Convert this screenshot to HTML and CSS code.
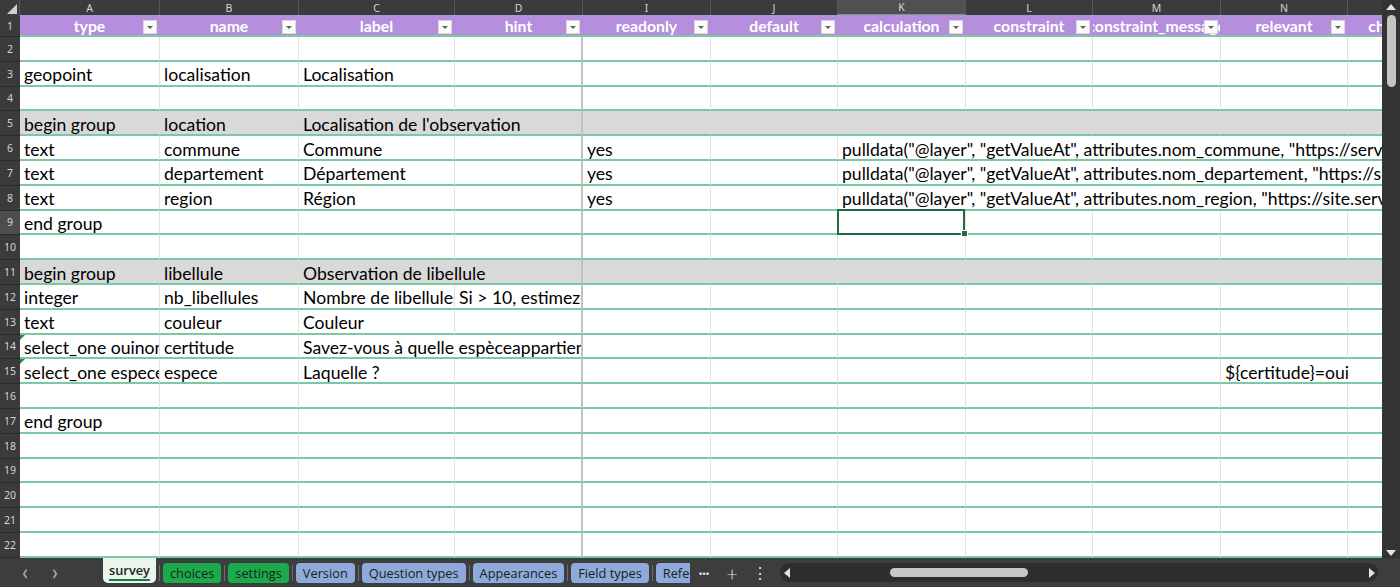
FILE: index.html
```html
<!DOCTYPE html>
<html lang="fr">

<head>
    <meta charset="UTF-8">
    <meta name="viewport" content="width=device-width, initial-scale=1.0">
    <title>survey - formulaire libellules</title>
    <link rel="stylesheet" href="styles.css">
</head>

<body>
    <div class="app">
        <div class="main">
            <div class="sheet">
                <!-- column letters -->
                <div class="row colhead">
                    <div class="corner"></div>
                    <div class="ch">A</div><div class="ch">B</div><div class="ch">C</div><div class="ch fz">D</div>
                    <div class="ch">I</div><div class="ch">J</div><div class="ch on">K</div><div class="ch">L</div>
                    <div class="ch">M</div><div class="ch">N</div><div class="ch">O</div>
                </div>

                <!-- table header -->
                <div class="row hdr">
                    <div class="rh">1</div>
                    <div class="c"><span>type</span><i class="fb"></i></div>
                    <div class="c"><span>name</span><i class="fb"></i></div>
                    <div class="c"><span>label</span><i class="fb"></i></div>
                    <div class="c"><span>hint</span><i class="fb"></i></div>
                    <div class="c"><span>readonly</span><i class="fb"></i></div>
                    <div class="c"><span>default</span><i class="fb"></i></div>
                    <div class="c"><span>calculation</span><i class="fb"></i></div>
                    <div class="c"><span>constraint</span><i class="fb"></i></div>
                    <div class="c"><span>constraint_message</span><i class="fb"></i></div>
                    <div class="c"><span>relevant</span><i class="fb"></i></div>
                    <div class="c"><span>choice_filter</span><i class="fb"></i></div>
                </div>

                <div class="row">
                    <div class="rh">2</div>
                    <div class="c"></div><div class="c"></div><div class="c"></div><div class="c fz"></div>
                    <div class="c"></div><div class="c"></div><div class="c"></div><div class="c"></div>
                    <div class="c"></div><div class="c"></div><div class="c"></div>
                </div>
                <div class="row">
                    <div class="rh">3</div>
                    <div class="c">geopoint</div><div class="c">localisation</div><div class="c">Localisation</div><div class="c fz"></div>
                    <div class="c"></div><div class="c"></div><div class="c"></div><div class="c"></div>
                    <div class="c"></div><div class="c"></div><div class="c"></div>
                </div>
                <div class="row">
                    <div class="rh">4</div>
                    <div class="c"></div><div class="c"></div><div class="c"></div><div class="c fz"></div>
                    <div class="c"></div><div class="c"></div><div class="c"></div><div class="c"></div>
                    <div class="c"></div><div class="c"></div><div class="c"></div>
                </div>
                <div class="row grp">
                    <div class="rh">5</div>
                    <div class="c">begin group</div><div class="c">location</div><div class="c fz s2">Localisation de l'observation</div>
                    <div class="c"></div><div class="c"></div><div class="c"></div><div class="c"></div>
                    <div class="c"></div><div class="c"></div><div class="c"></div>
                </div>
                <div class="row">
                    <div class="rh">6</div>
                    <div class="c">text</div><div class="c">commune</div><div class="c">Commune</div><div class="c fz"></div>
                    <div class="c">yes</div><div class="c"></div>
                    <div class="c s5">pulldata("@layer", "getValueAt", attributes.nom_commune, "https://services.arcgis.com/communes/FeatureServer/0", ${localisation})</div>
                </div>
                <div class="row">
                    <div class="rh">7</div>
                    <div class="c">text</div><div class="c">departement</div><div class="c">Département</div><div class="c fz"></div>
                    <div class="c">yes</div><div class="c"></div>
                    <div class="c s5">pulldata("@layer", "getValueAt", attributes.nom_departement, "https://services.arcgis.com/departements/FeatureServer/0", ${localisation})</div>
                </div>
                <div class="row">
                    <div class="rh">8</div>
                    <div class="c">text</div><div class="c">region</div><div class="c">Région</div><div class="c fz"></div>
                    <div class="c">yes</div><div class="c"></div>
                    <div class="c s5">pulldata("@layer", "getValueAt", attributes.nom_region, "https://site.services.arcgis.com/regions/FeatureServer/0", ${localisation})</div>
                </div>
                <div class="row">
                    <div class="rh on">9</div>
                    <div class="c">end group</div><div class="c"></div><div class="c"></div><div class="c fz"></div>
                    <div class="c"></div><div class="c"></div><div class="c sel"></div><div class="c"></div>
                    <div class="c"></div><div class="c"></div><div class="c"></div>
                </div>
                <div class="row">
                    <div class="rh">10</div>
                    <div class="c"></div><div class="c"></div><div class="c"></div><div class="c fz"></div>
                    <div class="c"></div><div class="c"></div><div class="c"></div><div class="c"></div>
                    <div class="c"></div><div class="c"></div><div class="c"></div>
                </div>
                <div class="row grp">
                    <div class="rh">11</div>
                    <div class="c">begin group</div><div class="c">libellule</div><div class="c fz s2">Observation de libellule</div>
                    <div class="c"></div><div class="c"></div><div class="c"></div><div class="c"></div>
                    <div class="c"></div><div class="c"></div><div class="c"></div>
                </div>
                <div class="row">
                    <div class="rh">12</div>
                    <div class="c">integer</div><div class="c">nb_libellules</div><div class="c">Nombre de libellules</div><div class="c fz">Si &gt; 10, estimez le nombre</div>
                    <div class="c"></div><div class="c"></div><div class="c"></div><div class="c"></div>
                    <div class="c"></div><div class="c"></div><div class="c"></div>
                </div>
                <div class="row">
                    <div class="rh">13</div>
                    <div class="c">text</div><div class="c">couleur</div><div class="c">Couleur</div><div class="c fz"></div>
                    <div class="c"></div><div class="c"></div><div class="c"></div><div class="c"></div>
                    <div class="c"></div><div class="c"></div><div class="c"></div>
                </div>
                <div class="row">
                    <div class="rh">14</div>
                    <div class="c err">select_one ouinon</div><div class="c">certitude</div><div class="c fz s2">Savez-vous à quelle espèceappartient la libellule ?</div>
                    <div class="c"></div><div class="c"></div><div class="c"></div><div class="c"></div>
                    <div class="c"></div><div class="c"></div><div class="c"></div>
                </div>
                <div class="row">
                    <div class="rh">15</div>
                    <div class="c err">select_one especes</div><div class="c">espece</div><div class="c">Laquelle ?</div><div class="c fz"></div>
                    <div class="c"></div><div class="c"></div><div class="c"></div><div class="c"></div>
                    <div class="c"></div><div class="c s2">${certitude}=oui</div>
                </div>
                <div class="row">
                    <div class="rh">16</div>
                    <div class="c"></div><div class="c"></div><div class="c"></div><div class="c fz"></div>
                    <div class="c"></div><div class="c"></div><div class="c"></div><div class="c"></div>
                    <div class="c"></div><div class="c"></div><div class="c"></div>
                </div>
                <div class="row">
                    <div class="rh">17</div>
                    <div class="c">end group</div><div class="c"></div><div class="c"></div><div class="c fz"></div>
                    <div class="c"></div><div class="c"></div><div class="c"></div><div class="c"></div>
                    <div class="c"></div><div class="c"></div><div class="c"></div>
                </div>
                <div class="row">
                    <div class="rh">18</div>
                    <div class="c"></div><div class="c"></div><div class="c"></div><div class="c fz"></div>
                    <div class="c"></div><div class="c"></div><div class="c"></div><div class="c"></div>
                    <div class="c"></div><div class="c"></div><div class="c"></div>
                </div>
                <div class="row">
                    <div class="rh">19</div>
                    <div class="c"></div><div class="c"></div><div class="c"></div><div class="c fz"></div>
                    <div class="c"></div><div class="c"></div><div class="c"></div><div class="c"></div>
                    <div class="c"></div><div class="c"></div><div class="c"></div>
                </div>
                <div class="row">
                    <div class="rh">20</div>
                    <div class="c"></div><div class="c"></div><div class="c"></div><div class="c fz"></div>
                    <div class="c"></div><div class="c"></div><div class="c"></div><div class="c"></div>
                    <div class="c"></div><div class="c"></div><div class="c"></div>
                </div>
                <div class="row">
                    <div class="rh">21</div>
                    <div class="c"></div><div class="c"></div><div class="c"></div><div class="c fz"></div>
                    <div class="c"></div><div class="c"></div><div class="c"></div><div class="c"></div>
                    <div class="c"></div><div class="c"></div><div class="c"></div>
                </div>
                <div class="row">
                    <div class="rh">22</div>
                    <div class="c"></div><div class="c"></div><div class="c"></div><div class="c fz"></div>
                    <div class="c"></div><div class="c"></div><div class="c"></div><div class="c"></div>
                    <div class="c"></div><div class="c"></div><div class="c"></div>
                </div>
            </div>

            <div class="vscroll">
                <span class="arrow up"></span>
                <div class="vthumb"></div>
                <span class="arrow down"></span>
            </div>
        </div>

        <div class="tabbar">
            <div class="nav">
                <span>&lsaquo;</span>
                <span>&rsaquo;</span>
            </div>
            <div class="tabs">
                <div class="tab active">survey</div>
                <i class="sep"></i>
                <div class="tab green">choices</div>
                <i class="sep"></i>
                <div class="tab green">settings</div>
                <i class="sep"></i>
                <div class="tab blue">Version</div>
                <i class="sep"></i>
                <div class="tab blue">Question types</div>
                <i class="sep"></i>
                <div class="tab blue">Appearances</div>
                <i class="sep"></i>
                <div class="tab blue">Field types</div>
                <i class="sep"></i>
                <div class="tab blue">References</div>
            </div>
            <div class="tools">
                <span class="more">&middot;&middot;&middot;</span>
                <span class="add">+</span>
                <span class="kebab">&#8942;</span>
            </div>
            <div class="hscroll">
                <span class="arrow left"></span>
                <div class="hthumb"></div>
                <span class="arrow right"></span>
            </div>
        </div>
    </div>
</body>

</html>
```

FILE: styles.css
```css
* {
    box-sizing: border-box;
}

body {
    margin: 0;
    padding: 0;
    height: 587px;
    overflow: hidden;
    background-color: #3b3b3b;
    font-family: Lato, "Open Sans", sans-serif;
}

.app {
    display: flex;
    flex-direction: column;
    height: 587px;
}

.main {
    display: flex;
    height: 558px;
}

.sheet {
    width: 1382px;
    overflow: hidden;
    background-color: #fff;
}

/* one row of the grid, same tracks everywhere */
.row {
    display: grid;
    grid-template-columns: 20px 140px 139px 156px 128px 128px 127px 128px 127px 128px 127px 128px;
    height: 24.8px;
}

.c {
    display: flex;
    align-items: center;
    padding: 3px 4px 0;
    overflow: hidden;
    white-space: nowrap;
    font-size: 17.6px;
    color: #000;
    border-right: 1px solid #e1e1e1;
    border-bottom: 2px solid #7cc8a2;
}

.c.fz {
    border-right: 2px solid #c2c2c2;
}

.s2 {
    grid-column: span 2;
}

.s5 {
    grid-column: span 5;
}

/* row numbers */
.rh {
    display: flex;
    align-items: center;
    justify-content: center;
    background-color: #3b3b3b;
    color: #d4d4d4;
    font-family: "Noto Sans", sans-serif;
    font-size: 10.5px;
    border-bottom: 1px solid #2a2a2a;
}

.rh.on {
    background-color: #4d4d4d;
}

/* column letters */
.colhead {
    height: 15px;
    background-color: #3b3b3b;
}

.ch {
    display: flex;
    align-items: center;
    justify-content: center;
    color: #d4d4d4;
    font-family: "Noto Sans", sans-serif;
    font-size: 10.5px;
    border-right: 1px solid #565656;
}

.ch.on {
    background-color: #505050;
    border-bottom: 2px solid #8c8c8c;
}

.corner {
    position: relative;
    border-right: 1px solid #565656;
}

.corner::after {
    content: "";
    position: absolute;
    right: 2px;
    bottom: 2px;
    border-left: 10px solid transparent;
    border-bottom: 10px solid #d0d0d0;
}

/* purple header row */
.hdr {
    height: 22px;
}

.hdr .c {
    position: relative;
    justify-content: center;
    padding: 1px 0 0;
    background-color: #b58fdd;
    border-right: 1px solid #b58fdd;
    color: #fff;
    font-weight: bold;
    font-size: 15.8px;
}

.fb {
    position: absolute;
    right: 2px;
    top: 5px;
    width: 14px;
    height: 14px;
    background-color: #fbfbfb;
    border: 1px solid #d7d7d7;
}

.fb::after {
    content: "";
    position: absolute;
    left: 3px;
    top: 5px;
    border-left: 3px solid transparent;
    border-right: 3px solid transparent;
    border-top: 3px solid #606060;
}

/* begin group rows */
.grp .c {
    background-color: #d9d9d9;
    border-right-color: #d9d9d9;
}

.grp .c.fz {
    border-right-color: #c2c2c2;
}

.sel {
    position: relative;
    overflow: visible;
}

.sel::after {
    content: "";
    position: absolute;
    left: -1px;
    top: -2px;
    right: 0;
    bottom: -2px;
    border: 2px solid #1f6b43;
}

.sel::before {
    content: "";
    position: absolute;
    right: -3px;
    bottom: -4px;
    width: 5px;
    height: 5px;
    background-color: #1f6b43;
    border: 1px solid #fff;
    z-index: 1;
}

.err {
    position: relative;
}

.err::before {
    content: "";
    position: absolute;
    left: 0;
    top: 0;
    border-top: 5px solid #2b8a4c;
    border-right: 5px solid transparent;
}

/* scrollbars */
.vscroll {
    width: 18px;
    display: flex;
    flex-direction: column;
    align-items: center;
    padding: 4px 0 2px;
    background-color: #333;
}

.vthumb {
    width: 9px;
    height: 72px;
    margin-top: 5px;
    border-radius: 5px;
    background-color: #c4c4c4;
}

.arrow {
    width: 0;
    height: 0;
}

.arrow.up {
    border-left: 5px solid transparent;
    border-right: 5px solid transparent;
    border-bottom: 6px solid #e4e4e4;
}

.arrow.down {
    margin-top: auto;
    border-left: 5px solid transparent;
    border-right: 5px solid transparent;
    border-top: 6px solid #e4e4e4;
}

/* sheet tabs */
.tabbar {
    display: flex;
    align-items: center;
    height: 29px;
    background-color: #3d3d3d;
}

.nav {
    display: flex;
    width: 103px;
    padding-left: 10px;
    padding-bottom: 3px;
    color: #b0b0b0;
    font-size: 24px;
}

.nav span {
    width: 30px;
    text-align: center;
    line-height: 22px;
}

.tabs {
    display: flex;
    align-items: center;
    width: 587px;
    height: 29px;
    overflow: hidden;
}

.tab {
    flex-shrink: 0;
    height: 20px;
    padding: 0 7px;
    border-radius: 4px;
    font-family: "Open Sans", sans-serif;
    font-size: 12.8px;
    line-height: 20px;
    color: #1c1c1c;
}

.tab.green {
    background-color: #1cab4c;
}

.tab.blue {
    background-color: #8eaadb;
}

.tab.active {
    align-self: flex-start;
    height: 25px;
    padding: 2px 6px 0;
    border-radius: 0 0 5px 5px;
    background-color: #eaf5ec;
    color: #222;
    font-weight: 600;
    text-decoration: underline;
    text-decoration-color: #107c41;
    text-decoration-thickness: 2px;
    text-underline-offset: 4px;
}

.sep {
    flex-shrink: 0;
    width: 1px;
    height: 16px;
    margin: 0 3px;
    background-color: #6c6c6c;
}

.tools {
    display: flex;
    align-items: center;
    width: 90px;
    color: #e2e2e2;
}

.tools span {
    width: 28px;
    text-align: center;
}

.more {
    font-size: 13px;
    font-weight: bold;
}

.add {
    font-size: 20px;
    font-weight: 300;
}

.kebab {
    font-size: 16px;
}

.hscroll {
    display: flex;
    align-items: center;
    width: 598px;
    height: 19px;
    padding: 0 3px 0 4px;
    border-radius: 9px;
    background-color: #2e2e2e;
}

.arrow.left {
    border-top: 5px solid transparent;
    border-bottom: 5px solid transparent;
    border-right: 6px solid #e4e4e4;
}

.arrow.right {
    margin-left: auto;
    border-top: 5px solid transparent;
    border-bottom: 5px solid transparent;
    border-left: 6px solid #e4e4e4;
}

.hthumb {
    width: 138px;
    height: 9px;
    margin-left: 100px;
    border-radius: 5px;
    background-color: #c6c6c6;
}
```
